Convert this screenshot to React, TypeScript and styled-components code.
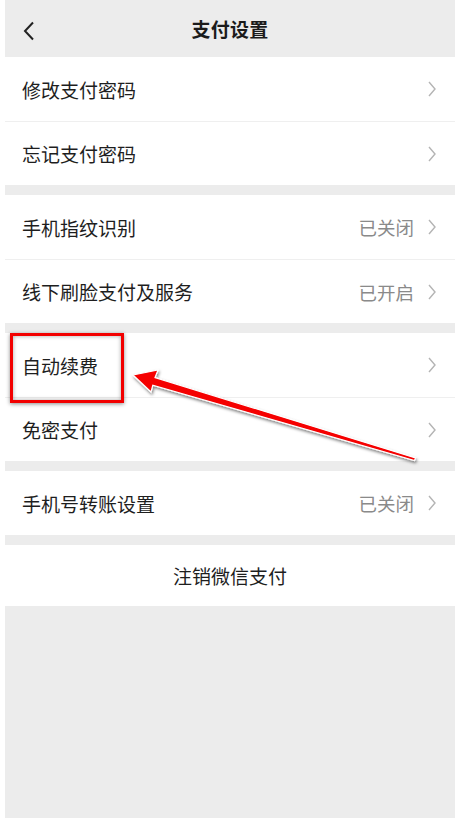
import React from 'react';
import styled, { createGlobalStyle } from 'styled-components';

const GlobalStyle = createGlobalStyle`
  html, body {
    margin: 0;
    padding: 0;
    background: #ffffff;
  }
  body {
    font-family: "Noto Sans CJK SC", "Noto Sans", sans-serif;
  }
`;

const Page = styled.div`
  position: relative;
  width: 458px;
  height: 820px;
  padding: 0 3px 2px 5px;
  box-sizing: border-box;
  background: #ffffff;
`;

const Screen = styled.div`
  display: flex;
  flex-direction: column;
  height: 100%;
  background: #ececec;
`;

const Header = styled.header`
  position: relative;
  height: 57px;
  display: flex;
  align-items: center;
  justify-content: center;
  flex-shrink: 0;
`;

const BackButton = styled.button`
  position: absolute;
  left: 12px;
  top: 18px;
  width: 24px;
  height: 26px;
  padding: 0;
  border: none;
  background: none;
  display: flex;
  align-items: center;
  justify-content: center;
`;

const Title = styled.h1`
  margin: 0;
  font-size: 19px;
  font-weight: 600;
  color: #1b1b1b;
  letter-spacing: 0.2px;
`;

const Section = styled.section<{ $gap?: number }>`
  background: #ffffff;
  margin-bottom: ${p => p.$gap ?? 10}px;
`;

const Row = styled.div`
  height: 64px;
  display: flex;
  align-items: center;
  padding-left: 17px;
  padding-right: 19px;
  box-sizing: border-box;

  & + & {
    border-top: 1px solid #efefef;
  }
`;

const RowInner = styled.div`
  flex: 1;
  display: flex;
  align-items: center;
  height: 100%;
`;

const Label = styled.span`
  flex: 1;
  font-size: 19px;
  color: #1e1e1e;
`;

const Status = styled.span`
  font-size: 18.5px;
  color: #8a8a8a;
  margin-right: 14px;
`;

const Chevron = styled.svg`
  width: 8px;
  height: 16px;
  flex-shrink: 0;
`;

const ActionButton = styled.button`
  height: 61px;
  width: 100%;
  border: none;
  background: #ffffff;
  font-family: inherit;
  font-size: 19px;
  color: #1e1e1e;
  padding: 0;
`;

const Highlight = styled.div`
  position: absolute;
  left: 10px;
  top: 333px;
  width: 114px;
  height: 70px;
  box-sizing: border-box;
  border: 3px solid #f20000;
  box-shadow: 0 1px 4px rgba(0, 0, 0, 0.45), inset 0 0 4px rgba(0, 0, 0, 0.35);
  pointer-events: none;
`;

const ArrowLayer = styled.svg`
  position: absolute;
  left: 0;
  top: 0;
  width: 458px;
  height: 820px;
  pointer-events: none;
`;

type Item = { label: string; status?: string };

const sections: Item[][] = [
  [{ label: '修改支付密码' }, { label: '忘记支付密码' }],
  [
    { label: '手机指纹识别', status: '已关闭' },
    { label: '线下刷脸支付及服务', status: '已开启' },
  ],
  [{ label: '自动续费' }, { label: '免密支付' }],
  [{ label: '手机号转账设置', status: '已关闭' }],
];

const ChevronIcon = () => (
  <Chevron viewBox="0 0 8 16">
    <path d="M1 1 L7 8 L1 15" fill="none" stroke="#b4b4b4" strokeWidth="1.4" />
  </Chevron>
);

export default function App() {
  return (
    <>
      <GlobalStyle />
      <Page>
        <Screen>
          <Header>
            <BackButton aria-label="返回">
              <svg width="12" height="20" viewBox="0 0 12 20">
                <path d="M10 1.5 L2 10 L10 18.5" fill="none" stroke="#222" strokeWidth="2" />
              </svg>
            </BackButton>
            <Title>支付设置</Title>
          </Header>

          {sections.map((items, i) => (
            <Section key={i} $gap={i === sections.length - 1 ? 10 : 10}>
              {items.map(item => (
                <Row key={item.label}>
                  <RowInner>
                    <Label>{item.label}</Label>
                    {item.status && <Status>{item.status}</Status>}
                    <ChevronIcon />
                  </RowInner>
                </Row>
              ))}
            </Section>
          ))}

          <ActionButton>注销微信支付</ActionButton>
        </Screen>

        <Highlight />

        <ArrowLayer viewBox="0 0 458 820">
          <defs>
            <filter id="arrowShadow" x="-10%" y="-50%" width="120%" height="200%">
              <feDropShadow dx="1" dy="2" stdDeviation="1.6" floodColor="#000" floodOpacity="0.5" />
            </filter>
          </defs>
          <polygon
            points="133,375 158,370 155,377.6 415.5,458 414.5,460.5 152.8,385.2 151,392"
            fill="#f50000"
            stroke="#ffffff"
            strokeWidth="1.2"
            strokeLinejoin="miter"
            filter="url(#arrowShadow)"
          />
        </ArrowLayer>
      </Page>
    </>
  );
}
